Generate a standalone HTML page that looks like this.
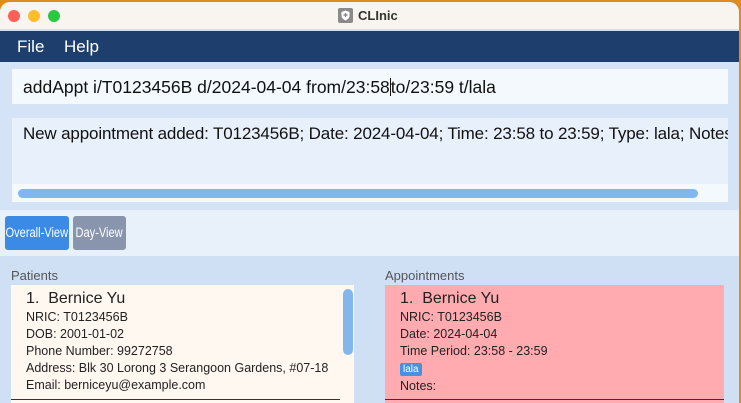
<!DOCTYPE html>
<html><head><style>
*{margin:0;padding:0;box-sizing:border-box}
body{width:741px;height:403px;overflow:hidden;background:#e08a20;font-family:"Liberation Sans",sans-serif;position:relative}
.win{position:absolute;left:0;top:2px;width:739px;height:401px;background:#cfe0f5;border-radius:10px 10px 0 0;overflow:hidden}
.title{position:absolute;left:0;top:0;width:739px;height:28px;background:#f8f4f0;border-bottom:1px solid #ddd}
.dot{position:absolute;top:8px;width:12px;height:12px;border-radius:50%}
.menu{position:absolute;top:29px;left:0;width:739px;height:31px;background:#1e3f6e;color:#fff;font-size:17px}
.menu span{position:absolute;top:6px}
.box{position:absolute;background:#f3f9fd}
.abs{position:absolute}
.btn{position:absolute;top:214px;height:34px;border-radius:3px;color:#fff;font-size:13.5px;line-height:34px;white-space:nowrap;overflow:hidden}
.btn span{display:block;transform:scaleX(0.82);transform-origin:center;text-align:center;width:140%;margin-left:-20%}
</style></head><body>
<div class="win">
 <div class="title">
  <div class="dot" style="left:8px;background:#fe5f57"></div>
  <div class="dot" style="left:28px;background:#febc2e"></div>
  <div class="dot" style="left:48px;background:#28c840"></div>
  <div class="abs" style="left:338px;top:6px;width:15px;height:15px;background:#8a8a8a;border-radius:2px"><svg width="15" height="15"><path d="M7.5 2.5L11.5 4v3.5c0 2.5-2 4-4 5-2-1-4-2.5-4-5V4z" fill="#fff"/><path d="M7.5 5v4M5.5 7h4" stroke="#8a8a8a" stroke-width="1.4"/></svg></div>
  <div class="abs" style="left:358px;top:6px;font-size:13px;font-weight:bold;color:#333">CLInic</div>
 </div>
 <div class="menu"><span style="left:17px">File</span><span style="left:64px">Help</span></div>
 <div class="abs" style="left:0;top:60px;width:739px;height:148px;background:#d4e3f6"></div>
 <div class="box" style="left:12px;top:67px;width:716px;height:35px;font-size:17.5px;color:#111;padding:8px 0 0 11px;white-space:nowrap">addAppt i/T0123456B d/2024-04-04 from/23:58<span style="display:inline-block;width:1px;height:18px;background:#111;vertical-align:-3px"></span>to/23:59 t/lala</div>
 <div class="box" style="left:12px;top:116px;width:716px;height:84px;background:#e8f0fb;overflow:hidden">
  <div style="white-space:nowrap;font-size:17px;color:#111;padding:6px 0 0 11px;letter-spacing:-0.15px">New appointment added: T0123456B; Date: 2024-04-04; Time: 23:58 to 23:59; Type: lala; Notes:</div>
  <div class="abs" style="left:0;top:66px;width:716px;height:18px;background:#f3f9fd"></div>
  <div class="abs" style="left:6px;top:71px;width:680px;height:9px;background:#84b6ee;border-radius:5px"></div>
 </div>
 <div class="abs" style="left:0;top:208px;width:739px;height:46px;background:#e8f0fa"></div>
 <div class="btn" style="left:5px;width:64px;background:#3a8ae6"><span>Overall-View</span></div>
 <div class="btn" style="left:73px;width:53px;background:#8895ad"><span>Day-View</span></div>
 <div class="abs" style="left:11px;top:266px;font-size:13px;color:#555">Patients</div>
 <div class="abs" style="left:385px;top:266px;font-size:13px;color:#555">Appointments</div>
 <div class="abs" style="left:11px;top:283px;width:343px;height:120px;background:#fff8f0;color:#222;font-size:12.5px;line-height:17px;padding:4px 0 0 15px">
  <div style="font-size:16px;line-height:20px">1.&nbsp; Bernice Yu</div>
  <div>NRIC: T0123456B</div><div>DOB: 2001-01-02</div><div>Phone Number: 99272758</div><div style="white-space:nowrap">Address: Blk 30 Lorong 3 Serangoon Gardens, #07-18</div><div>Email: berniceyu@example.com</div>
  <div class="abs" style="left:0;top:114px;width:329px;height:1px;background:#333"></div>
  <div class="abs" style="left:332px;top:4px;width:10px;height:66px;background:#84b6ee;border-radius:5px"></div>
 </div>
 <div class="abs" style="left:385px;top:283px;width:339px;height:120px;background:#ffabb0;color:#222;font-size:12.5px;line-height:17px;padding:4px 0 0 15px">
  <div style="font-size:16px;line-height:20px">1.&nbsp; Bernice Yu</div>
  <div>NRIC: T0123456B</div><div>Date: 2024-04-04</div><div>Time Period: 23:58 - 23:59</div>
  <div><span style="background:#4a90e2;color:#fff;font-size:10px;padding:1px 3px;border-radius:2px">lala</span></div>
  <div>Notes:</div>
  <div class="abs" style="left:0;top:114px;width:339px;height:1px;background:#333"></div>
 </div>
</div>
</body></html>
